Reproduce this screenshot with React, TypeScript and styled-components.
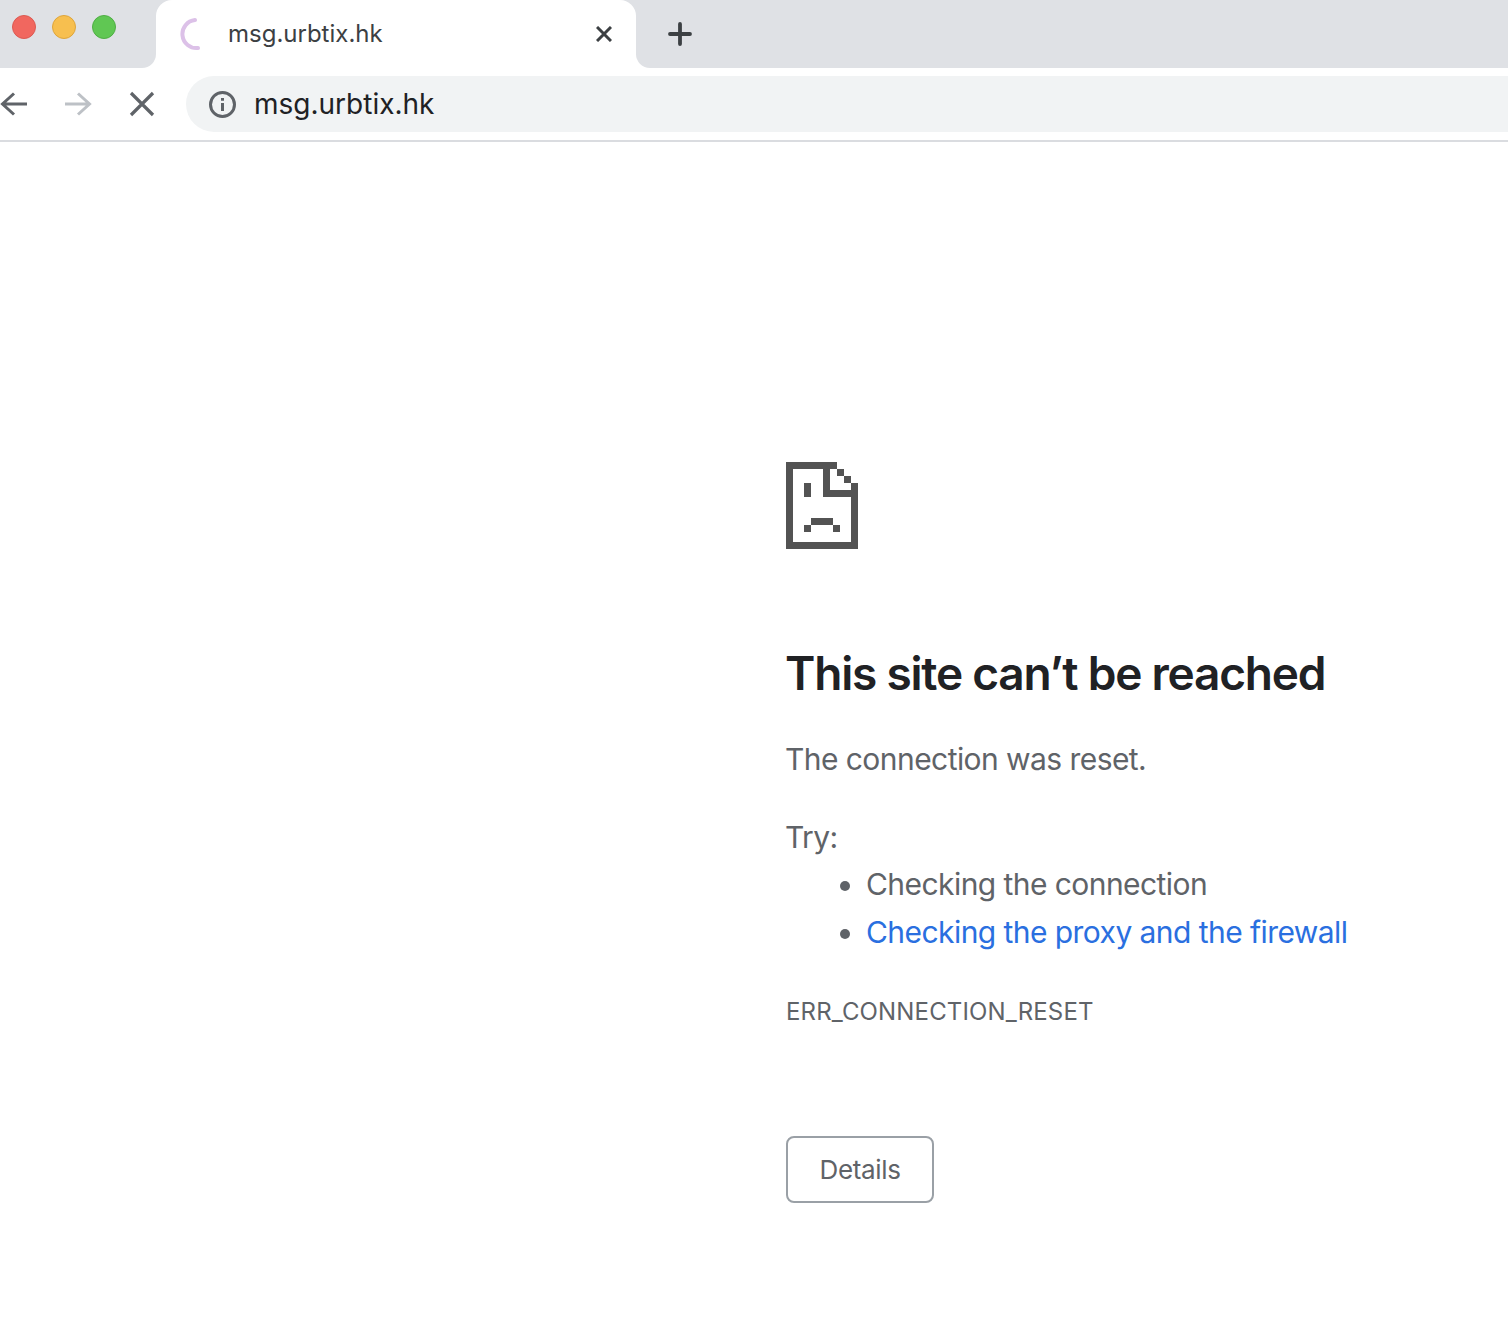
import React from "react";
import styled, { createGlobalStyle } from "styled-components";

const Global = createGlobalStyle`
  html, body { margin: 0; padding: 0; background: #fff; }
  body { font-family: "Inter", "Liberation Sans", sans-serif; overflow: hidden; }
`;
const Page = styled.div`
  width: 1508px; height: 1330px; overflow: hidden; background: #fff; display: flex; flex-direction: column;
`;
const TabStrip = styled.div`
  display: flex; height: 68px; flex: none;
  background: linear-gradient(#dfe1e5 50%, #fff 50%);
`;
const StripLeft = styled.div`
  width: 156px; flex: none; background: #dfe1e5; border-bottom-right-radius: 14px;
  display: flex; align-items: flex-start; gap: 16px; padding: 15px 0 0 12px; box-sizing: border-box;
`;
const Light = styled.span<{ $bg: string; $edge: string }>`
  width: 24px; height: 24px; border-radius: 50%; box-sizing: border-box;
  background: ${p => p.$bg}; border: 1px solid ${p => p.$edge};
`;
const Tab = styled.div`
  width: 480px; flex: none; background: #fff; border-radius: 16px 16px 0 0;
  display: flex; align-items: center; padding: 0 24px; box-sizing: border-box;
  font-size: 24px; color: #3c4043;
`;
const TabTitle = styled.span`
  margin: -2px 0 0 24px; flex: 1;
`;
const StripRight = styled.div`
  flex: 1; background: #dfe1e5; border-bottom-left-radius: 14px;
  display: flex; align-items: center; padding-left: 30px;
`;
const Toolbar = styled.div`
  height: 74px; flex: none; background: #fff; border-bottom: 2px solid #dadce0;
  display: flex; align-items: flex-start; box-sizing: border-box; padding-top: 8px;
`;
const NavIcons = styled.div`
  width: 186px; flex: none; height: 56px;
  display: flex; align-items: center; gap: 36px;
`;
const Omnibox = styled.div`
  flex: 1; height: 56px; background: #f1f3f4; border-radius: 28px 0 0 28px;
  display: flex; align-items: center; padding-left: 22px; gap: 18px;
  font-size: 28px; color: #202124;
`;
const Main = styled.main`
  padding: 320px 0 0 786px; display: flex; flex-direction: column; align-items: flex-start; color: #5f6368;
`;
const Title = styled.h1`
  margin: 96px 0 0 -1px; font-size: 46px; font-weight: 600; line-height: 56px; letter-spacing: -1.2px;
  color: #202124; white-space: nowrap;
`;
const Para = styled.p`
  margin: 34px 0 0 -1px; font-size: 30px; line-height: 48px; letter-spacing: -0.56px; white-space: nowrap;
`;
const TryLabel = styled(Para)`
  margin-top: 30px;
`;
const List = styled.ul`
  margin: -1px 0 0; padding: 0 0 0 80px; font-size: 30px; line-height: 48px; letter-spacing: -0.56px; white-space: nowrap;
`;
const Link = styled.a`
  color: #2a6fe0; text-decoration: none;
`;
const Code = styled.div`
  margin-top: 40px; font-size: 24px; line-height: 32px; letter-spacing: 0.15px; white-space: nowrap;
`;
const DetailsButton = styled.button`
  margin-top: 108px; width: 148px; height: 67px; background: #fff; border: 2px solid #9aa0a6; border-radius: 8px;
  font: 400 26px "Inter", sans-serif; letter-spacing: -0.35px; color: #5f6368; padding: 0;
`;

export default function App() {
  return (
    <Page>
      <Global />
      <TabStrip>
        <StripLeft>
          <Light $bg="#f1675f" $edge="#dc5a52" />
          <Light $bg="#f7bf4f" $edge="#dea53b" />
          <Light $bg="#60c753" $edge="#4fae44" />
        </StripLeft>
        <Tab>
          <svg width="24" height="36" viewBox="0 0 24 36" fill="none">
            <path d="M15 4 A14 14 0 1 0 18 32" stroke="#dcc1e8" strokeWidth="4" strokeLinecap="round" />
          </svg>
          <TabTitle>msg.urbtix.hk</TabTitle>
          <svg width="16" height="16" viewBox="0 0 16 16" fill="none">
            <path d="M1 1 L15 15 M15 1 L1 15" stroke="#3c4043" strokeWidth="3" />
          </svg>
        </Tab>
        <StripRight>
          <svg width="28" height="28" viewBox="0 0 28 28" fill="none">
            <path d="M14 4 V24 M4 14 H24" stroke="#3c4043" strokeWidth="3.8" strokeLinecap="round" />
          </svg>
        </StripRight>
      </TabStrip>
      <Toolbar>
        <NavIcons>
          <svg width="28" height="28" viewBox="0 0 28 28" fill="none">
            <path d="M27 14 H3 M14 3.5 L2.5 14 L14 24.5" stroke="#5f6368" strokeWidth="3" />
          </svg>
          <svg width="28" height="28" viewBox="0 0 28 28" fill="none">
            <path d="M1 14 H25 M14 3.5 L25.5 14 L14 24.5" stroke="#bdc1c6" strokeWidth="3" />
          </svg>
          <svg width="28" height="28" viewBox="0 0 28 28" fill="none">
            <path d="M3 3 L25 25 M25 3 L3 25" stroke="#5f6368" strokeWidth="3.2" />
          </svg>
        </NavIcons>
        <Omnibox>
          <svg width="28" height="28" viewBox="0 0 28 28" fill="none">
            <circle cx="14.5" cy="14.5" r="12" stroke="#5f6368" strokeWidth="3" />
            <path d="M14.5 13 V21 M14.5 8 V10.8" stroke="#5f6368" strokeWidth="3" />
          </svg>
          <span>msg.urbtix.hk</span>
        </Omnibox>
      </Toolbar>
      <Main>
        <svg width="72" height="87" viewBox="0 0 72 87">
          <path fillRule="evenodd" fill="#535353" shapeRendering="crispEdges"
            d="M0 0H51V7H58V14H65V21H72V87H0Z M7 7V80H65V35H37V7Z M44 7V28H65V21H58V14H51V7Z M18 21V35H25V21Z M25 56V63H18V70H25V63H47V70H54V63H47V56Z" />
        </svg>
        <Title>This site can’t be reached</Title>
        <Para>The connection was reset.</Para>
        <TryLabel>Try:</TryLabel>
        <List>
          <li>Checking the connection</li>
          <li><Link href="#">Checking the proxy and the firewall</Link></li>
        </List>
        <Code>ERR_CONNECTION_RESET</Code>
        <DetailsButton>Details</DetailsButton>
      </Main>
    </Page>
  );
}
